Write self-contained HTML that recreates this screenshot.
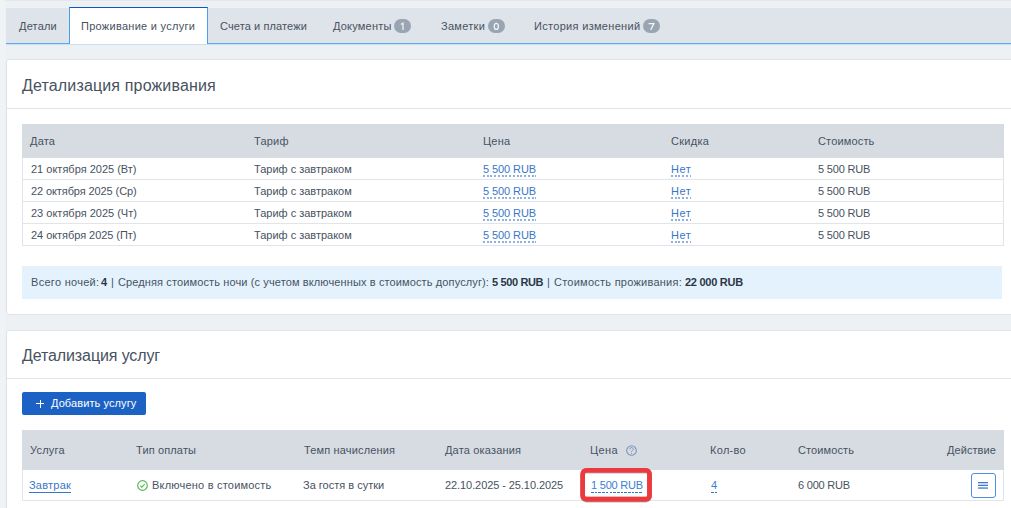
<!DOCTYPE html>
<html><head><meta charset="utf-8">
<style>
*{margin:0;padding:0;box-sizing:border-box}
html,body{width:1011px;height:508px;overflow:hidden}
body{background:#eef1f4;font-family:"Liberation Sans",sans-serif;font-size:11px;color:#475261;position:relative}
.a{position:absolute;white-space:nowrap;line-height:13px;color:#475261}
.title{line-height:19px}
.b{font-weight:bold;color:#2c3746}
.btnt{color:#fff}
.d{color:#3a76c8;position:relative}
.d::after{content:"";position:absolute;left:0;right:0;bottom:-2px;height:2px;background:repeating-linear-gradient(90deg,#8cb1e4 0 2px,transparent 2px 3.75px)}
.d2{color:#3a7fd0;position:relative}
.d2::after{content:"";position:absolute;left:0;right:0;bottom:-2px;height:1px;background:repeating-linear-gradient(90deg,#3272cc 0 2.6px,transparent 2.6px 3.7px)}
.u{color:#3a76c8;position:relative}
.u::after{content:"";position:absolute;left:0;right:0;bottom:-2px;height:1px;background:#3a76c8}
.topline{position:absolute;left:0;top:0;width:1011px;height:1px;background:#e4e8ec}
.tabbar{position:absolute;left:6px;top:8px;width:1010px;height:36px;background:#dfe3ea;border-bottom:1px solid #62aaeb;box-shadow:0 1px 0 rgba(98,170,235,.25)}
.tab-active{position:absolute;left:69px;top:7px;width:139px;height:37px;background:#fff;border:1px solid #4a9ef2;border-top:1px solid #0a58c2;border-bottom:none}
.badge{position:absolute}
.panel{position:absolute;left:6px;width:1020px;background:#fff;border:1px solid #dfe3e9;border-radius:3px}
.divider{position:absolute;left:0;width:100%;height:1px;background:#e1e5ea}
.thead{position:absolute;background:#d7dce3}
.tbody{position:absolute;background:#fff;border:1px solid #e1e5ea;border-top:none}
.hr{position:absolute;height:1px;background:#e1e5ea}
.info{position:absolute;left:22px;top:266px;width:980px;height:33px;background:#e4f2fd}
.btn{position:absolute;left:22px;top:392px;width:124px;height:23px;background:#1b62c4;border-radius:2px}
.plus{position:absolute;background:#fff}
.red{position:absolute;left:580px;top:468px;width:71px;height:33px;border:4px solid #ee3a3e;border-radius:6px;box-shadow:0 0.5px 1.5px rgba(40,20,20,.55)}
.act{position:absolute;left:971px;top:473px;width:25px;height:25px;border:1px solid #4d8fe0;border-radius:3px;background:#fff}
.ham{position:absolute;left:978px;width:10px;height:2px;background:#3a76c8}
</style></head><body>
<div class="topline"></div>
<div style="position:absolute;left:0;top:0;width:5px;height:508px;background:#f0f3f6"></div>
<div class="tabbar"></div>
<div class="tab-active"></div>
<svg class="badge" style="left:394px;top:19px" width="17" height="14" viewBox="0 0 17 14"><rect x="0" y="0" width="17" height="14" rx="7" fill="#9aa5b3"/><path d="M6.9 5.6 L9.0 4.1 V10.9" stroke="#f2f4f7" stroke-width="1.25" fill="none"/></svg>
<svg class="badge" style="left:488px;top:19px" width="17" height="14" viewBox="0 0 17 14"><rect x="0" y="0" width="17" height="14" rx="7" fill="#9aa5b3"/><ellipse cx="8.3" cy="7.45" rx="2.05" ry="3.0" stroke="#f2f4f7" stroke-width="1.25" fill="none"/></svg>
<svg class="badge" style="left:643px;top:19px" width="17" height="14" viewBox="0 0 17 14"><rect x="0" y="0" width="17" height="14" rx="7" fill="#9aa5b3"/><path d="M5.6 4.6 H10.9 L7.7 10.9" stroke="#f2f4f7" stroke-width="1.25" fill="none"/></svg>

<div class="panel" style="top:59px;height:256px"><div class="divider" style="top:48px"></div></div>
<div class="thead" style="left:22px;top:124px;width:982px;height:34px"></div>
<div class="tbody" style="left:22px;top:158px;width:982px;height:88px"></div>
<div class="hr" style="left:23px;top:179px;width:980px"></div>
<div class="hr" style="left:23px;top:201px;width:980px"></div>
<div class="hr" style="left:23px;top:223px;width:980px"></div>
<div class="info"></div>

<div class="panel" style="top:330px;height:200px"><div class="divider" style="top:47px"></div></div>
<div class="btn"></div>
<div class="plus" style="left:36px;top:403px;width:8px;height:1px"></div>
<div class="plus" style="left:40px;top:400px;width:1px;height:8px"></div>
<div class="thead" style="left:22px;top:430px;width:982px;height:40px"></div>
<div class="tbody" style="left:22px;top:470px;width:982px;height:31px"></div>

<svg style="position:absolute;left:137px;top:480px" width="11" height="11" viewBox="0 0 11 11"><circle cx="5.5" cy="5.5" r="4.8" fill="none" stroke="#5cb85c" stroke-width="1.2"/><path d="M3.3 5.6 L4.8 7.1 L7.7 4.1" fill="none" stroke="#5cb85c" stroke-width="1.2"/></svg>
<svg style="position:absolute;left:626px;top:445px" width="11" height="11" viewBox="0 0 11 11"><circle cx="5.5" cy="5.5" r="4.8" fill="none" stroke="#7d96bb" stroke-width="1.1"/><path d="M3.9 4.3 A1.65 1.65 0 1 1 6.3 5.6 Q5.5 6.1 5.5 6.9" fill="none" stroke="#7d96bb" stroke-width="1"/><circle cx="5.5" cy="8.3" r="0.6" fill="#7d96bb"/></svg>

<div class="a tab" style="left:19px;top:20px;font-size:11px;letter-spacing:0.18px;">Детали</div>
<div class="a tab" style="left:81px;top:20px;font-size:11px;letter-spacing:0.28px;">Проживание и услуги</div>
<div class="a tab" style="left:220px;top:20px;font-size:11px;letter-spacing:0.11px;">Счета и платежи</div>
<div class="a tab" style="left:333px;top:20px;font-size:11px;letter-spacing:0.21px;">Документы</div>
<div class="a tab" style="left:441px;top:20px;font-size:11px;letter-spacing:0.30px;">Заметки</div>
<div class="a tab" style="left:534px;top:20px;font-size:11px;letter-spacing:0.31px;">История изменений</div>
<div class="a th" style="left:30px;top:135px;font-size:11px;letter-spacing:0.20px;">Дата</div>
<div class="a th" style="left:254px;top:135px;font-size:11px;letter-spacing:0.20px;">Тариф</div>
<div class="a th" style="left:483px;top:135px;font-size:11px;letter-spacing:0.20px;">Цена</div>
<div class="a th" style="left:671px;top:135px;font-size:11px;letter-spacing:0.28px;">Скидка</div>
<div class="a th" style="left:818px;top:135px;font-size:11px;letter-spacing:0.16px;">Стоимость</div>
<div class="a td" style="left:31px;top:163px;font-size:11px;">21 октября 2025 (Вт)</div>
<div class="a td" style="left:254px;top:163px;font-size:11px;letter-spacing:-0.01px;">Тариф с завтраком</div>
<div class="a td lnk" style="left:483px;top:163px;font-size:11px;letter-spacing:-0.08px;"><span class="d">5 500 RUB</span></div>
<div class="a td lnk" style="left:671px;top:163px;font-size:11px;letter-spacing:0.55px;"><span class="d">Нет</span></div>
<div class="a td" style="left:818px;top:163px;font-size:11px;letter-spacing:-0.19px;">5 500 RUB</div>
<div class="a td" style="left:31px;top:185px;font-size:11px;letter-spacing:-0.10px;">22 октября 2025 (Ср)</div>
<div class="a td" style="left:254px;top:185px;font-size:11px;letter-spacing:-0.01px;">Тариф с завтраком</div>
<div class="a td lnk" style="left:483px;top:185px;font-size:11px;letter-spacing:-0.08px;"><span class="d">5 500 RUB</span></div>
<div class="a td lnk" style="left:671px;top:185px;font-size:11px;letter-spacing:0.55px;"><span class="d">Нет</span></div>
<div class="a td" style="left:818px;top:185px;font-size:11px;letter-spacing:-0.19px;">5 500 RUB</div>
<div class="a td" style="left:31px;top:207px;font-size:11px;">23 октября 2025 (Чт)</div>
<div class="a td" style="left:254px;top:207px;font-size:11px;letter-spacing:-0.01px;">Тариф с завтраком</div>
<div class="a td lnk" style="left:483px;top:207px;font-size:11px;letter-spacing:-0.08px;"><span class="d">5 500 RUB</span></div>
<div class="a td lnk" style="left:671px;top:207px;font-size:11px;letter-spacing:0.55px;"><span class="d">Нет</span></div>
<div class="a td" style="left:818px;top:207px;font-size:11px;letter-spacing:-0.19px;">5 500 RUB</div>
<div class="a td" style="left:31px;top:229px;font-size:11px;letter-spacing:-0.05px;">24 октября 2025 (Пт)</div>
<div class="a td" style="left:254px;top:229px;font-size:11px;letter-spacing:-0.01px;">Тариф с завтраком</div>
<div class="a td lnk" style="left:483px;top:229px;font-size:11px;letter-spacing:-0.08px;"><span class="d">5 500 RUB</span></div>
<div class="a td lnk" style="left:671px;top:229px;font-size:11px;letter-spacing:0.55px;"><span class="d">Нет</span></div>
<div class="a td" style="left:818px;top:229px;font-size:11px;letter-spacing:-0.19px;">5 500 RUB</div>
<div class="a td" style="left:31px;top:276px;font-size:11px;letter-spacing:0.29px;">Всего ночей:</div>
<div class="a td b" style="left:101px;top:276px;font-size:11px;font-weight:bold;">4</div>
<div class="a td" style="left:111px;top:276px;font-size:11px;">|</div>
<div class="a td" style="left:118px;top:276px;font-size:11px;letter-spacing:0.12px;">Средняя стоимость ночи (с учетом включенных в стоимость допуслуг):</div>
<div class="a td b" style="left:492px;top:276px;font-size:11px;font-weight:bold;letter-spacing:-0.36px;">5 500 RUB</div>
<div class="a td" style="left:547px;top:276px;font-size:11px;">|</div>
<div class="a td" style="left:554px;top:276px;font-size:11px;letter-spacing:0.25px;">Стоимость проживания:</div>
<div class="a td b" style="left:685px;top:276px;font-size:11px;font-weight:bold;letter-spacing:-0.27px;">22 000 RUB</div>
<div class="a td btnt" style="left:51px;top:397px;font-size:11px;letter-spacing:0.09px;">Добавить услугу</div>
<div class="a th" style="left:30px;top:444px;font-size:11px;letter-spacing:0.20px;">Услуга</div>
<div class="a th" style="left:136px;top:444px;font-size:11px;letter-spacing:0.14px;">Тип оплаты</div>
<div class="a th" style="left:304px;top:444px;font-size:11px;letter-spacing:0.16px;">Темп начисления</div>
<div class="a th" style="left:445px;top:444px;font-size:11px;letter-spacing:0.17px;">Дата оказания</div>
<div class="a th" style="left:590px;top:444px;font-size:11px;letter-spacing:0.37px;">Цена</div>
<div class="a th" style="left:710px;top:444px;font-size:11px;letter-spacing:0.30px;">Кол-во</div>
<div class="a th" style="left:798px;top:444px;font-size:11px;letter-spacing:0.10px;">Стоимость</div>
<div class="a th" style="left:947px;top:444px;font-size:11px;letter-spacing:0.06px;">Действие</div>
<div class="a td lnk2" style="left:29px;top:479px;font-size:11px;letter-spacing:0.23px;"><span class="u">Завтрак</span></div>
<div class="a td" style="left:152px;top:479px;font-size:11px;letter-spacing:0.21px;">Включено в стоимость</div>
<div class="a td" style="left:303px;top:479px;font-size:11px;">За гостя в сутки</div>
<div class="a td" style="left:445px;top:479px;font-size:11px;letter-spacing:-0.08px;">22.10.2025 - 25.10.2025</div>
<div class="a td lnk" style="left:591px;top:479px;font-size:11px;letter-spacing:-0.22px;"><span class="d2">1 500 RUB</span></div>
<div class="a td lnk" style="left:711px;top:479px;font-size:11px;"><span class="d2">4</span></div>
<div class="a td" style="left:798px;top:479px;font-size:11px;letter-spacing:-0.21px;">6 000 RUB</div>
<div class="a title" style="left:22px;top:76px;font-size:16px;line-height:19px;letter-spacing:0.15px;">Детализация проживания</div>
<div class="a title" style="left:22px;top:346px;font-size:16px;line-height:19px;letter-spacing:-0.11px;">Детализация услуг</div>

<svg style="position:absolute;left:570px;top:458px" width="92" height="54" viewBox="570 458 92 54"><defs><filter id="sh" x="-20%" y="-30%" width="140%" height="160%"><feDropShadow dx="0" dy="0.4" stdDeviation="0.55" flood-color="#2a1a1a" flood-opacity="0.75"/></filter></defs><rect x="582.7" y="470.3" width="66.8" height="28.8" rx="3.6" fill="none" stroke="#ef393d" stroke-width="4.6" filter="url(#sh)"/></svg>
<div class="act"></div>
<svg style="position:absolute;left:976px;top:478px" width="14" height="14" viewBox="0 0 14 14"><rect x="2" y="4" width="10" height="1.3" fill="#3f7bcc"/><rect x="2" y="6.7" width="10" height="1.3" fill="#3f7bcc"/><rect x="2" y="9.4" width="10" height="1.3" fill="#3f7bcc"/></svg>
</body></html>
